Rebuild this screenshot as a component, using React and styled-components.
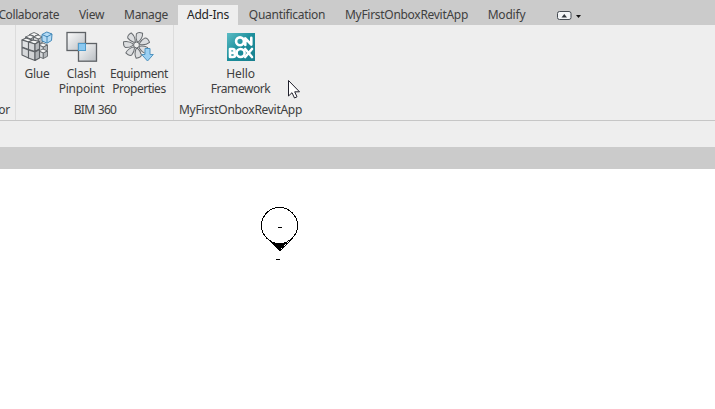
import React from "react";
import styled, { createGlobalStyle } from "styled-components";

const GlobalStyle = createGlobalStyle`
  * { box-sizing: border-box; }
  body { margin: 0; background: #fff; overflow: hidden; }
`;

const Window = styled.div`
  width: 715px;
  height: 409px;
  display: flex;
  flex-direction: column;
  overflow: hidden;
  background: #fff;
  color: #404040;
  font-family: "Noto Sans", "Open Sans", sans-serif;
  font-size: 12px;
  line-height: 15px;
`;

const TabBar = styled.nav`
  height: 25px;
  flex: none;
  display: flex;
  align-items: flex-end;
  background: #cbcbcb;
`;

const Tab = styled.div`
  width: ${(p) => p.$width}px;
  height: 20px;
  flex: none;
  display: flex;
  justify-content: ${(p) => p.$align || "center"};
  padding: 2px ${(p) => (p.$align ? 10 : 0)}px 0 0;
  white-space: nowrap;
  letter-spacing: ${(p) => p.$track || 0}px;
  background: ${(p) => (p.$active ? "#eeeeee" : "transparent")};
  color: ${(p) => (p.$active ? "#242424" : "#404040")};
`;

const RibbonToggle = styled.div`
  height: 20px;
  margin-left: 20px;
  padding-top: 5px;
`;

const Ribbon = styled.div`
  height: 96px;
  flex: none;
  display: flex;
  background: #eeeeee;
  border-bottom: 1px solid #c6c6c6;
`;

const Panel = styled.section`
  width: ${(p) => p.$width}px;
  flex: none;
  display: flex;
  flex-direction: column;
  border-right: 1px solid #dcdcdc;
  &:last-child { border-right: 0; }
`;

const Tools = styled.div`
  height: 77px;
  flex: none;
  display: flex;
  justify-content: ${(p) => (p.$center ? "center" : "flex-start")};
`;

const Tool = styled.div`
  width: ${(p) => p.$width}px;
  flex: none;
  display: flex;
  flex-direction: column;
  align-items: center;
  padding-top: 5px;
  svg { display: block; flex: none; margin-bottom: 4px; }
`;

const Label = styled.span`
  height: 15px;
  white-space: nowrap;
  letter-spacing: ${(p) => p.$track || 0}px;
`;

const PanelTitle = styled.div`
  display: flex;
  justify-content: ${(p) => p.$align || "center"};
  padding: 0 ${(p) => (p.$align ? 5 : 0)}px 0 ${(p) => p.$inset || 0}px;
  white-space: nowrap;
  letter-spacing: ${(p) => p.$track || 0}px;
  word-spacing: 1px;
`;

const OptionsBar = styled.div`
  height: 26px;
  flex: none;
  background: #eeeeee;
`;

const ViewHeader = styled.div`
  height: 22px;
  flex: none;
  background: #cbcbcb;
`;

const Canvas = styled.main`
  position: relative;
  flex: 1;
  background: #fff;
`;

const Marker = styled.svg`
  position: absolute;
  left: 258px;
  top: 36px;
`;

const Pointer = styled.svg`
  position: absolute;
  left: 287px;
  top: 79px;
`;

const tabs = [
  { name: "Collaborate", width: 69, track: -0.4, align: "flex-end" },
  { name: "View", width: 45, track: -0.3 },
  { name: "Manage", width: 64, track: -0.35 },
  { name: "Add-Ins", width: 60, track: -0.2, active: true },
  { name: "Quantification", width: 98, track: -0.28 },
  { name: "MyFirstOnboxRevitApp", width: 141, track: -0.29 },
  { name: "Modify", width: 59, track: -0.2 },
];

function Cube({ x, y }) {
  return (
    <g transform={`translate(${x} ${y})`} stroke="#62666a" strokeWidth="0.9" strokeLinejoin="round">
      <path d="M0 2 L4.5 0 L9 2 L4.8 4 Z" fill="#f7f7f7" />
      <path d="M0 2 L4.8 4 V9.5 L0 7.5 Z" fill="#d7d9db" />
      <path d="M4.8 4 L9 2 V7.3 L4.8 9.5 Z" fill="#b4b7ba" />
    </g>
  );
}

function GlueIcon() {
  return (
    <svg width="32" height="32" viewBox="0 0 32 32">
      <Cube x={8.5} y={2.5} />
      <Cube x={4.5} y={5} />
      <Cube x={12.5} y={5} />
      <Cube x={17.5} y={13} />
      <Cube x={17.5} y={19} />
      <g stroke="#5c6064" strokeWidth="1.1" strokeLinejoin="round">
        <path d="M1 10 L5 8 L11 10 L7.5 12 Z M7.5 12 L12 10 L18.5 11.5 L14 14 Z" fill="#f7f7f7" />
        <path d="M1 10 L7.5 12 V19.5 L1 17 Z" fill="#dfe1e3" />
        <path d="M7.5 12 L14 14 V21.5 L7.5 19.5 Z" fill="#d5d7d9" />
        <path d="M14 14 L18.5 11.5 V19 L14 21.5 Z" fill="#b7babd" />
        <path d="M1 17.5 L7.5 20 V28 L1 25 Z" fill="#d6d8da" />
        <path d="M7.5 20 L14 22 V30.5 L7.5 28 Z" fill="#d1d3d5" />
        <path d="M14 22 L18.5 19.5 V28 L14 30.5 Z" fill="#aeb2b5" />
      </g>
      <g stroke="#4288b8" strokeLinejoin="round">
        <path d="M21 4.5 L25.8 2 L31 4 L30.5 10.5 L26 13.2 L21 10.8 Z" fill="#b4daf4" />
        <path d="M21 4.5 L26 6.8 L31 4 M26 6.8 V13" fill="none" />
      </g>
    </svg>
  );
}

function ClashIcon() {
  return (
    <svg width="32" height="32" viewBox="0 0 32 32">
      <defs>
        <linearGradient id="sheet" x1="0" y1="0" x2="1" y2="1">
          <stop offset="0" stopColor="#fbfbfb" />
          <stop offset="1" stopColor="#b9bec3" />
        </linearGradient>
      </defs>
      <rect x="1" y="2.5" width="18.5" height="18" fill="url(#sheet)" stroke="#5e6266" strokeWidth="1.3" />
      <rect x="12.5" y="13.5" width="18" height="17.7" fill="url(#sheet)" stroke="#5e6266" strokeWidth="1.3" />
      <rect x="12.5" y="13.5" width="7" height="7" fill="#8ac8f0" stroke="#4f9bcb" />
    </svg>
  );
}

function FanIcon() {
  return (
    <svg width="32" height="32" viewBox="0 0 32 32">
      <g fill="#dcdee0" stroke="#676b6f" strokeWidth="1" strokeLinejoin="round">
        {[20, 71, 123, 174, 226, 277, 329].map((angle) => (
          <path
            key={angle}
            transform={`rotate(${angle} 13.5 15)`}
            d="M12.8 11.6 Q10.2 9 9.6 4.6 Q10.5 1.8 15.2 1.8 Q17 6.5 14.2 11.6 Z"
          />
        ))}
        <circle cx="13.5" cy="15" r="2.9" fill="#eceded" />
      </g>
      <path
        d="M22 18.5 H27 V24.5 H30.3 L24.5 31 L18.7 24.5 H22 Z"
        fill="#9bd0f3"
        stroke="#5094c0"
      />
    </svg>
  );
}

function OnboxIcon() {
  return (
    <svg width="32" height="32" viewBox="0 0 32 32">
      <defs>
        <linearGradient id="teal" x1="0" y1="0" x2="1" y2="1">
          <stop offset="0" stopColor="#5cbcc5" />
          <stop offset="0.5" stopColor="#1b8e9b" />
          <stop offset="1" stopColor="#197f8e" />
        </linearGradient>
      </defs>
      <rect x="2" y="3" width="28" height="28" fill="url(#teal)" />
      <g fill="none" stroke="#fff" strokeWidth="2.6" strokeLinejoin="round" strokeLinecap="round">
        <circle cx="15" cy="11.3" r="3.9" />
        <path d="M20.3 15 V8.3 L26.3 14.5 V7.8" />
        <path d="M5 19 V27 H7.8 Q10.2 27 10.2 24.8 Q10.2 22.9 8 22.9 H5 M5 19 H7.4 Q9.6 19 9.6 20.9 Q9.6 22.9 7.6 22.9" />
        <circle cx="15.6" cy="23" r="4" />
        <path d="M20.2 19 L27 27 M27 19 L20.2 27" />
      </g>
    </svg>
  );
}

export default function App() {
  return (
    <>
      <GlobalStyle />
      <Window>
        <TabBar>
          {tabs.map((t) => (
            <Tab key={t.name} $width={t.width} $track={t.track} $align={t.align} $active={t.active}>
              <span>{t.name}</span>
            </Tab>
          ))}
          <RibbonToggle>
            <svg width="28" height="12" viewBox="0 0 28 12">
              <rect x="1.5" y="1.5" width="13.5" height="8" rx="2" fill="#f2f4f6" stroke="#454b52" />
              <path d="M5.5 7.5 L8.3 4 L11 7.5 Z" fill="#30363c" />
              <path d="M20 5 H25 L22.5 8 Z" fill="#111" />
            </svg>
          </RibbonToggle>
        </TabBar>
        <Ribbon>
          <Panel $width={16}>
            <Tools />
            <PanelTitle $align="flex-end" $track={-0.2}>or</PanelTitle>
          </Panel>
          <Panel $width={158}>
            <Tools>
              <Tool $width={42}>
                <GlueIcon />
                <Label $track={-0.2}>Glue</Label>
              </Tool>
              <Tool $width={47}>
                <ClashIcon />
                <Label $track={-0.2}>Clash</Label>
                <Label $track={-0.2}>Pinpoint</Label>
              </Tool>
              <Tool $width={68}>
                <FanIcon />
                <Label $track={-0.4}>Equipment</Label>
                <Label $track={-0.5}>Properties</Label>
              </Tool>
            </Tools>
            <PanelTitle $track={-0.7} $inset={1}>BIM 360</PanelTitle>
          </Panel>
          <Panel $width={133}>
            <Tools $center>
              <Tool $width={68}>
                <OnboxIcon />
                <Label $track={-0.1}>Hello</Label>
                <Label $track={-0.45}>Framework</Label>
              </Tool>
            </Tools>
            <PanelTitle $track={-0.29}>MyFirstOnboxRevitApp</PanelTitle>
          </Panel>
        </Ribbon>
        <OptionsBar />
        <ViewHeader />
        <Canvas>
          <Marker width="44" height="60" viewBox="0 0 44 60" shapeRendering="crispEdges">
            <path d="M8.5 33 L21.5 46.5 L34.5 33 Q21 43 8.5 33 Z" fill="#000" />
            <circle cx="21.5" cy="20.5" r="18" fill="#fff" stroke="#000" />
            <path d="M20 22.5 H24 M18 54.5 H22" stroke="#000" />
            <path d="M22 45.5 L33 34.5" stroke="#fff" strokeDasharray="1 1" />
            <path d="M22 46 L34 34" stroke="#000" />
          </Marker>
        </Canvas>
        <Pointer width="14" height="22" viewBox="0 0 14 22">
          <path
            d="M1.5 1.5 V17 L5 13.7 L7.5 19 L10 17.8 L7.7 12.8 H12.5 Z"
            fill="#fff"
            stroke="#20202c"
          />
        </Pointer>
      </Window>
    </>
  );
}
